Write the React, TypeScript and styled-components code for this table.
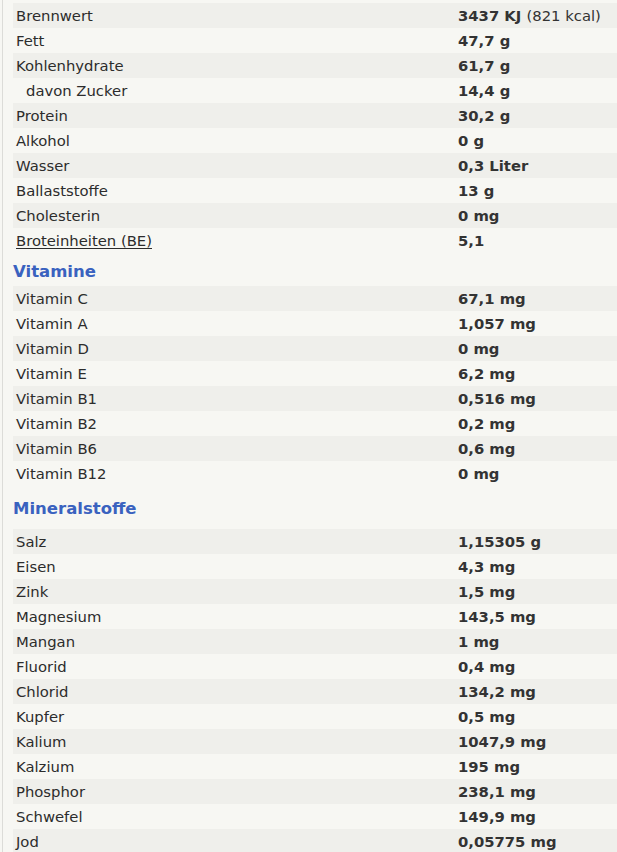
import React from "react";
import styled, { createGlobalStyle } from "styled-components";

const Global = createGlobalStyle`
  html, body { margin: 0; padding: 0; background: #f7f7f3; }
  body { font-family: "DejaVu Sans", Verdana, sans-serif; color: #2c2c2c; }
`;

const Wrapper = styled.div`
  margin-left: 2px;
  border-left: 1px solid #dcdcd8;
  padding: 3px 0 0 10px;
  min-height: 852px;
  box-sizing: border-box;
`;

const Table = styled.div`
  display: grid;
  grid-template-columns: 445px 1fr;
`;

const Row = styled.div<{ $dark: boolean }>`
  display: contents;
  & > div { background: ${(p) => (p.$dark ? "#efefeb" : "transparent")}; }
`;

const Cell = styled.div`
  box-sizing: border-box;
  height: 25px;
  padding-top: 2px;
  line-height: 21px;
  font-size: 14.8px;
  white-space: nowrap;
`;

const Label = styled(Cell)<{ $indent?: boolean }>`
  padding-left: ${(p) => (p.$indent ? "13px" : "3px")};
`;

const Abbr = styled.span`
  text-decoration: underline;
  text-underline-offset: 2px;
`;

const Value = styled(Cell)`
  font-weight: bold;
  color: #333;
`;

const Extra = styled.span`
  font-weight: normal;
`;

const Heading = styled.h2<{ $tall?: boolean }>`
  margin: 0;
  height: ${(p) => (p.$tall ? "43px" : "33px")};
  line-height: ${(p) => (p.$tall ? "45px" : "37px")};
  font-size: 16.5px;
  font-weight: bold;
  color: #3a62bf;
`;

type Item = { label: React.ReactNode; value: React.ReactNode; indent?: boolean };

const main: Item[] = [
  { label: "Brennwert", value: (<>3437 KJ <Extra>(821 kcal)</Extra></>) },
  { label: "Fett", value: "47,7 g" },
  { label: "Kohlenhydrate", value: "61,7 g" },
  { label: "davon Zucker", value: "14,4 g", indent: true },
  { label: "Protein", value: "30,2 g" },
  { label: "Alkohol", value: "0 g" },
  { label: "Wasser", value: "0,3 Liter" },
  { label: "Ballaststoffe", value: "13 g" },
  { label: "Cholesterin", value: "0 mg" },
  { label: <Abbr>Broteinheiten (BE)</Abbr>, value: "5,1" },
];

const vitamins: Item[] = [
  { label: "Vitamin C", value: "67,1 mg" },
  { label: "Vitamin A", value: "1,057 mg" },
  { label: "Vitamin D", value: "0 mg" },
  { label: "Vitamin E", value: "6,2 mg" },
  { label: "Vitamin B1", value: "0,516 mg" },
  { label: "Vitamin B2", value: "0,2 mg" },
  { label: "Vitamin B6", value: "0,6 mg" },
  { label: "Vitamin B12", value: "0 mg" },
];

const minerals: Item[] = [
  { label: "Salz", value: "1,15305 g" },
  { label: "Eisen", value: "4,3 mg" },
  { label: "Zink", value: "1,5 mg" },
  { label: "Magnesium", value: "143,5 mg" },
  { label: "Mangan", value: "1 mg" },
  { label: "Fluorid", value: "0,4 mg" },
  { label: "Chlorid", value: "134,2 mg" },
  { label: "Kupfer", value: "0,5 mg" },
  { label: "Kalium", value: "1047,9 mg" },
  { label: "Kalzium", value: "195 mg" },
  { label: "Phosphor", value: "238,1 mg" },
  { label: "Schwefel", value: "149,9 mg" },
  { label: "Jod", value: "0,05775 mg" },
];

const NutrientTable = ({ items }: { items: Item[] }) => (
  <Table>
    {items.map((it, i) => (
      <Row key={i} $dark={i % 2 === 0}>
        <Label $indent={it.indent}>{it.label}</Label>
        <Value>{it.value}</Value>
      </Row>
    ))}
  </Table>
);

export default function App() {
  return (
    <>
      <Global />
      <Wrapper>
        <NutrientTable items={main} />
        <Heading>Vitamine</Heading>
        <NutrientTable items={vitamins} />
        <Heading $tall>Mineralstoffe</Heading>
        <NutrientTable items={minerals} />
      </Wrapper>
    </>
  );
}
